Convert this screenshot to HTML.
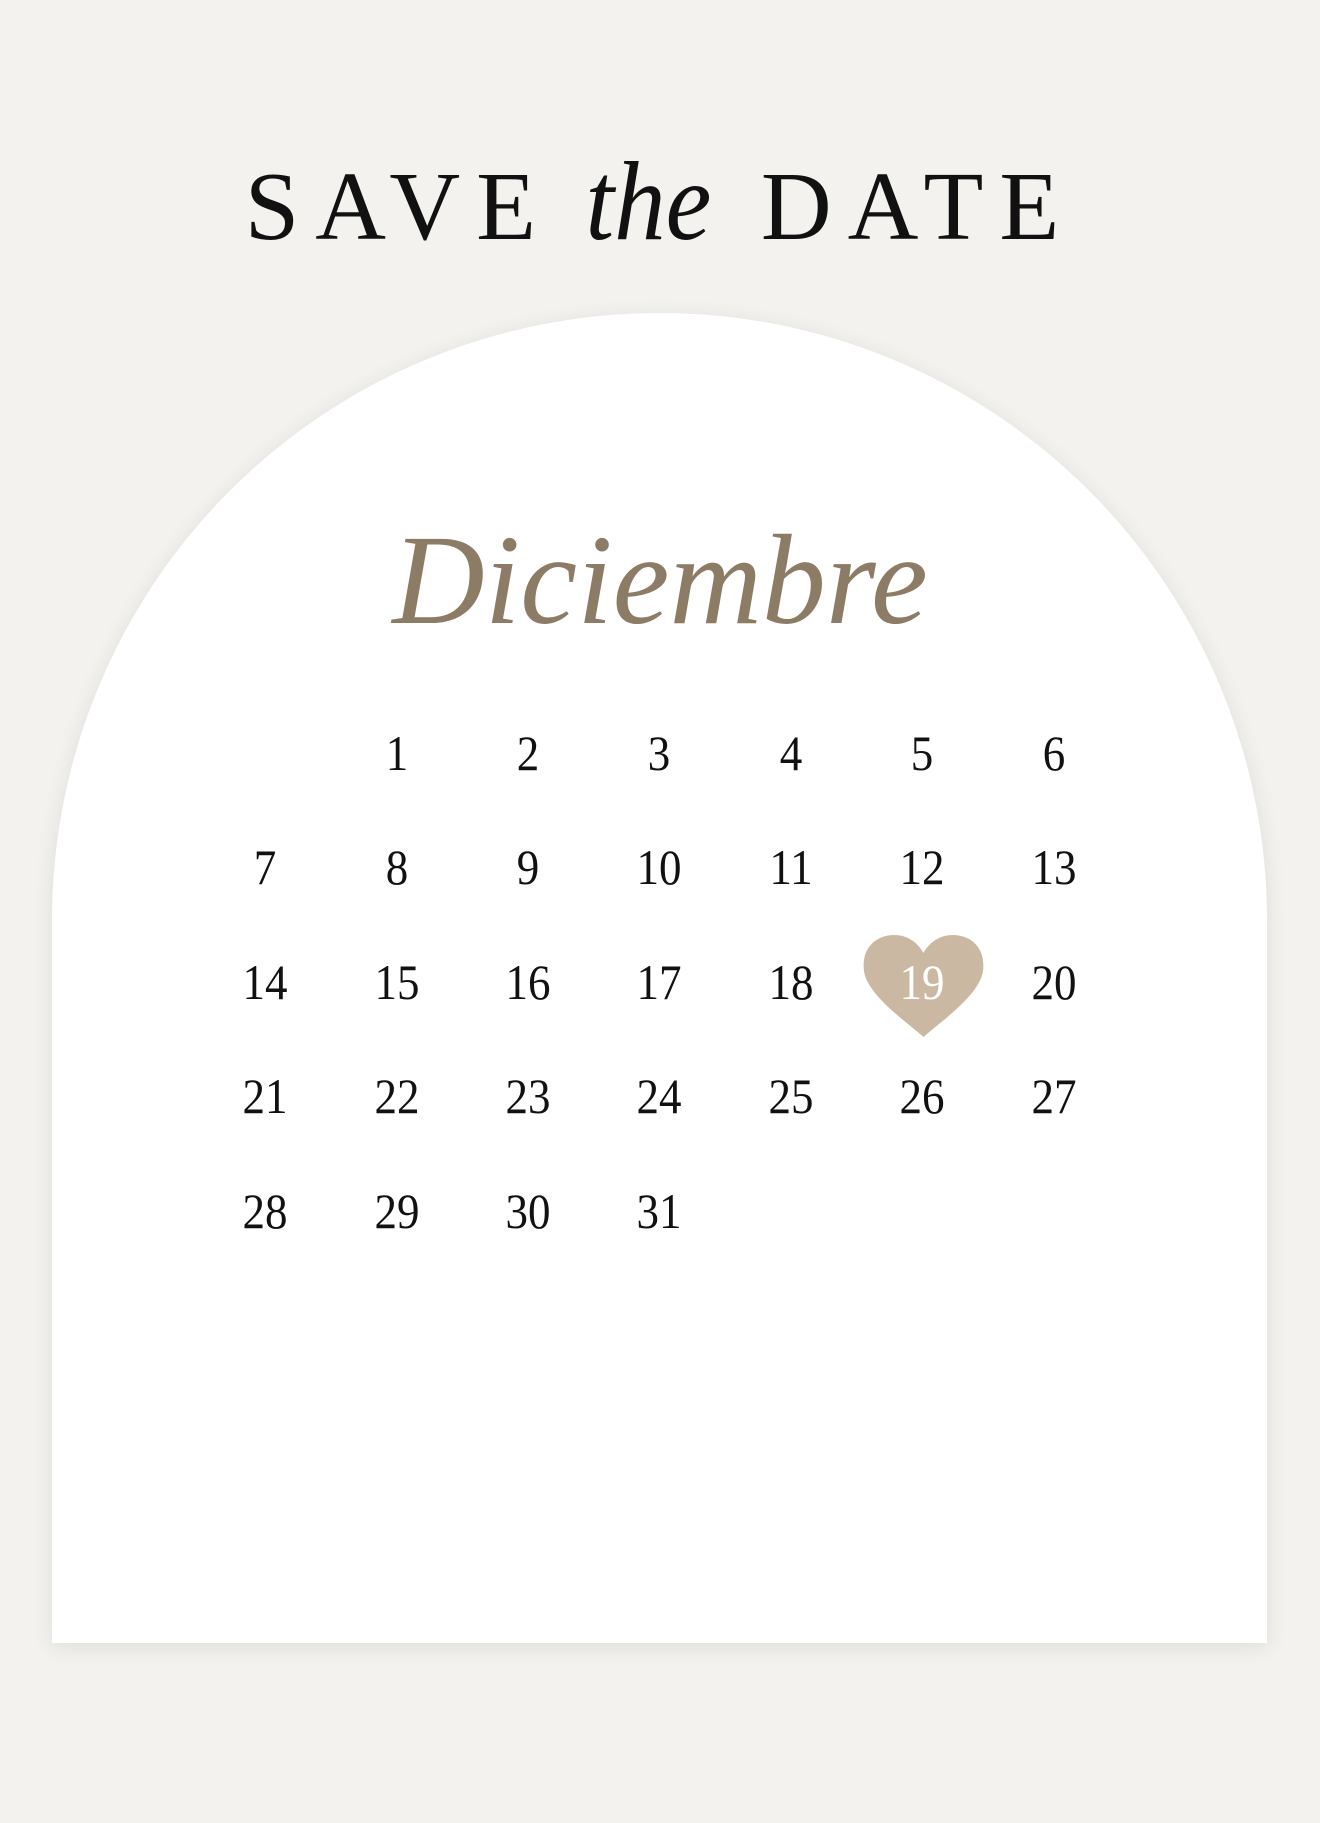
<!DOCTYPE html>
<html><head><meta charset="utf-8"><style>
html,body{margin:0;padding:0}
body{width:1320px;height:1823px;background:#f3f2ee;position:relative;overflow:hidden;font-family:"Liberation Serif",serif}
.card{position:absolute;left:52px;top:313px;width:1215px;height:1330px;background:#fff;border-radius:607px 607px 0 0/607px 607px 0 0;box-shadow:0 4px 22px rgba(0,0,0,0.09)}
.title{position:absolute;left:0;width:1320px;top:146px;text-align:center;font-size:98px;letter-spacing:16px;color:#111;line-height:1;white-space:nowrap}
.title i{font-size:112px;letter-spacing:0;margin:0 44px 0 28px;font-family:"Liberation Serif",serif;display:inline-block;transform:scaleX(0.92)}
.month{position:absolute;left:0;width:1320px;top:516px;text-align:center;font-size:128px;font-style:italic;color:#8c7b65;line-height:1;font-weight:normal}
.d{position:absolute;width:120px;margin-left:-60px;text-align:center;font-size:50px;color:#111;line-height:1;transform:scaleX(0.9)}
.heart{position:absolute;left:863px;top:933px;width:121px;height:104px}
</style></head><body>
<div class="title">SAVE<i>the</i>DATE</div>
<div class="card"></div>
<div class="month">Diciembre</div>
<svg class="heart" viewBox="0 0 121 104"><path d="M60.5 104 C45 90 4 62 1 38 C-2 14 14 2 31 2 C45 2 55 10 60.5 20 C66 10 76 2 90 2 C107 2 123 14 120 38 C117 62 76 90 60.5 104 Z" fill="#cbb8a2"/></svg>
<div id="g"></div>
<script>
var xs=[265,397,528,659,791,922,1054],ys=[728,842,957,1071,1186];
var h='';for(var n=1;n<=31;n++){var i=n;var r=Math.floor(i/7),c=i%7;
h+='<div class="d" style="left:'+xs[c]+'px;top:'+ys[r]+'px;'+(n==19?'color:#fff':'')+'">'+n+'</div>';}
document.getElementById('g').innerHTML=h;
</script>
</body></html>
